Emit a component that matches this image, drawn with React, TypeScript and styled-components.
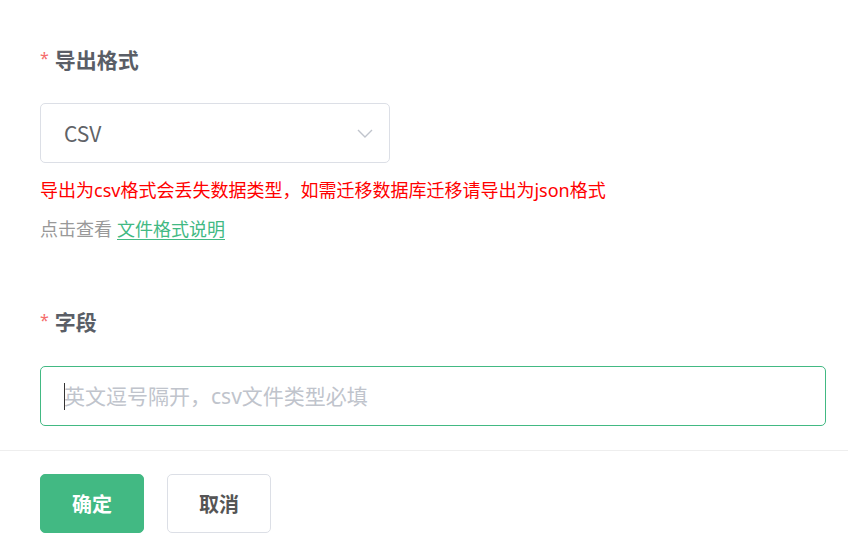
import React from 'react'
import styled, { createGlobalStyle } from 'styled-components'

const GlobalStyle = createGlobalStyle`
  html, body {
    margin: 0;
    padding: 0;
    background: #fff;
  }

  body {
    font-family: 'Noto Sans', 'Noto Sans CJK SC', sans-serif;
  }
`

const Page = styled.div`
  width: 848px;
  height: 551px;
  overflow: hidden;
  padding-top: 47px;
  box-sizing: border-box;
`

const Form = styled.div`
  padding: 0 22px 0 40px;
`

const FormItem = styled.div<{ $gap?: number }>`
  margin-top: ${(p) => p.$gap ?? 0}px;
`

const Label = styled.div`
  display: flex;
  align-items: center;
  height: 24px;
  font-size: 21px;
  font-weight: 700;
  color: #5a5e66;
`

const Star = styled.span`
  color: #f56c6c;
  font-size: 16px;
  font-weight: 400;
  margin-right: 6px;
  position: relative;
  top: -1px;
`

const Select = styled.div`
  margin-top: 32px;
  width: 350px;
  height: 60px;
  box-sizing: border-box;
  border: 1px solid #dcdfe6;
  border-radius: 5px;
  display: flex;
  align-items: center;
  justify-content: space-between;
  padding: 0 16px 0 23px;
  font-family: 'Noto Sans CJK SC', sans-serif;
  font-size: 21px;
  color: #606266;
`

const Warning = styled.div`
  margin-top: 14px;
  line-height: 26px;
  font-size: 18px;
  color: #ff0000;
`

const Hint = styled.div`
  margin-top: 13px;
  line-height: 26px;
  font-size: 18px;
  color: #999;
`

const Link = styled.a`
  color: #42b983;
  text-decoration: underline;
  text-underline-offset: 3px;
  margin-left: 5px;
`

const Field = styled.div`
  position: relative;
  margin-top: 33px;
`

const Input = styled.input`
  display: block;
  width: 100%;
  height: 60px;
  box-sizing: border-box;
  border: 1px solid #42b983;
  border-radius: 5px;
  padding: 0 23px;
  font-family: inherit;
  font-size: 21px;
  color: #606266;
  outline: none;

  &::placeholder {
    color: #c0c4cc;
  }
`

const Caret = styled.span`
  position: absolute;
  left: 24px;
  top: 17px;
  width: 1px;
  height: 27px;
  background: #333;
  pointer-events: none;
`

const Footer = styled.div`
  margin-top: 24px;
  border-top: 1px solid #eeeeee;
  padding: 23px 0 0 40px;
  display: flex;
  gap: 23px;
`

const Button = styled.button<{ $primary?: boolean }>`
  width: 104px;
  height: 59px;
  box-sizing: border-box;
  border-radius: 5px;
  font-family: inherit;
  font-size: 20px;
  font-weight: 700;
  cursor: pointer;
  border: 1px solid ${(p) => (p.$primary ? '#42b983' : '#dcdfe6')};
  background: ${(p) => (p.$primary ? '#42b983' : '#fff')};
  color: ${(p) => (p.$primary ? '#fff' : '#555')};
`

const Chevron = () => (
  <svg width="16" height="9" viewBox="0 0 16 9" fill="none">
    <path d="M1 1l7 7 7-7" stroke="#c0c4cc" strokeWidth="1.4" />
  </svg>
)

export default function App() {
  return (
    <Page>
      <GlobalStyle />
      <Form>
        <FormItem>
          <Label>
            <Star>*</Star>导出格式
          </Label>
          <Select>
            <span>CSV</span>
            <Chevron />
          </Select>
          <Warning>导出为csv格式会丢失数据类型，如需迁移数据库迁移请导出为json格式</Warning>
          <Hint>
            点击查看<Link>文件格式说明</Link>
          </Hint>
        </FormItem>
        <FormItem $gap={67}>
          <Label>
            <Star>*</Star>字段
          </Label>
          <Field>
            <Input placeholder="英文逗号隔开，csv文件类型必填" />
            <Caret />
          </Field>
        </FormItem>
      </Form>
      <Footer>
        <Button $primary>确定</Button>
        <Button>取消</Button>
      </Footer>
    </Page>
  )
}
